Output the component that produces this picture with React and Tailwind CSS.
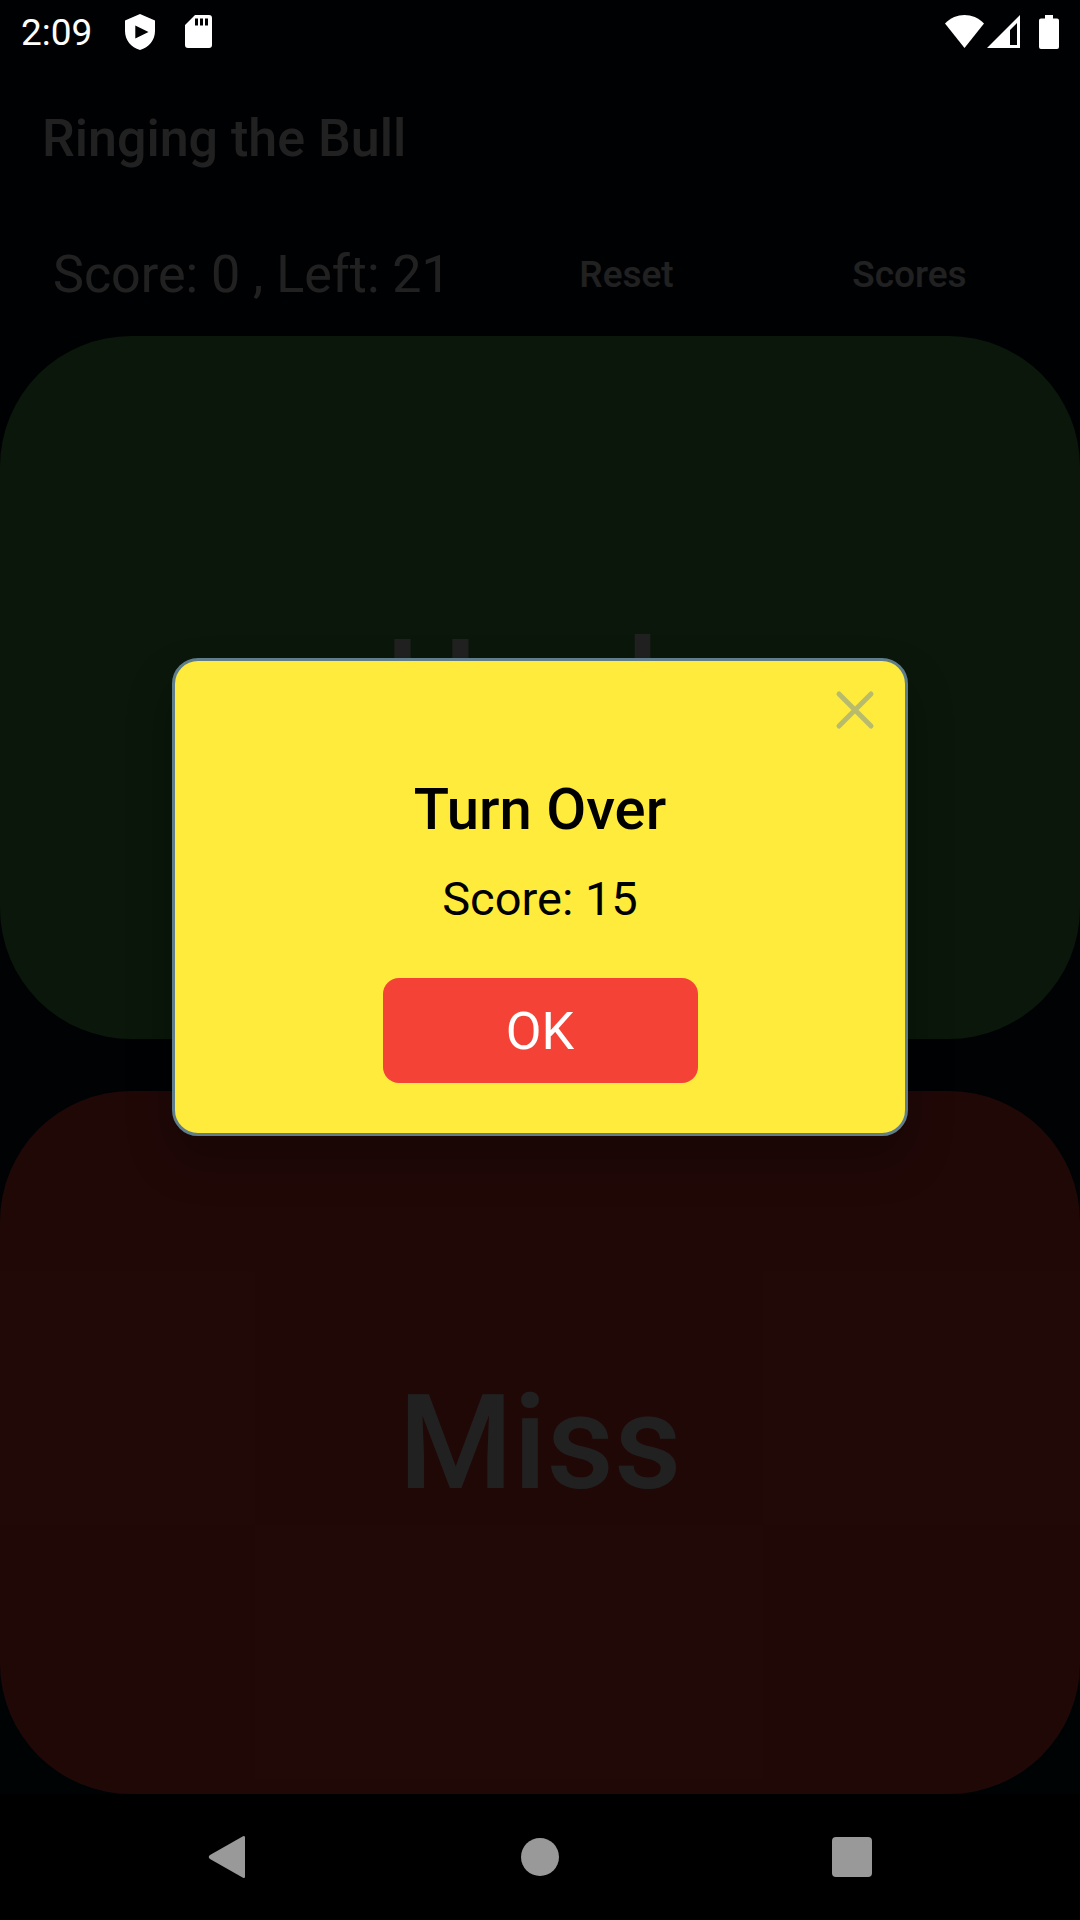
function StatusBar() {
  return (
    <div className="relative z-20 flex h-[63px] items-center justify-between px-[21px] text-white">
      <div className="flex items-center">
        <span className="pt-[2px] text-[37px] leading-[43px]">2:09</span>
        <svg viewBox="0 0 30 36" className="ml-[33px] h-[36px] w-[30px]" fill="currentColor">
          <path
            fillRule="evenodd"
            d="M15 0 L30 6.5 V17 C30 26 24 33.500 15 36 C6 33.500 0 26 0 17 V6.500 Z M10.300 11.500 V24.500 L23.500 18 Z"
          />
        </svg>
        <svg viewBox="0 0 27 33" className="ml-[30px] h-[33px] w-[27px]" fill="currentColor">
          <path
            fillRule="evenodd"
            d="M10 0 H24 Q27 0 27 3 V30 Q27 33 24 33 H3 Q0 33 0 30 V10 Z M10 3.500 V10.500 H13 V3.500 Z M15 3.500 V10.500 H18 V3.500 Z M20 3.500 V10.500 H23 V3.500 Z"
          />
        </svg>
      </div>
      <div className="flex items-center">
        <svg viewBox="0 0 39 33" className="h-[33px] w-[39px]" fill="currentColor">
          <path d="M0 8.500 C11 -2.800 28 -2.800 39 8.500 L19.500 33 Z" />
        </svg>
        <svg viewBox="0 0 33 33" className="ml-[3px] h-[33px] w-[33px]" fill="currentColor">
          <path fillRule="evenodd" d="M33 0 V33 H0 Z M30 8 L23 15 V30 H30 Z" />
        </svg>
        <svg viewBox="0 0 20 34" className="ml-[19px] h-[34px] w-[20px]" fill="currentColor">
          <path d="M6 0 H14 V3.500 H18 Q20 3.500 20 5.500 V32 Q20 34 18 34 H2 Q0 34 0 32 V5.500 Q0 3.500 2 3.500 H6 Z" />
        </svg>
      </div>
    </div>
  );
}

function ScoreDialog() {
  return (
    <div className="absolute inset-0 z-10 flex items-center justify-center bg-black/87">
      <div
        role="dialog"
        aria-labelledby="dialog-title"
        className="relative flex w-[736px] flex-col items-center rounded-[26px] border-3 border-[#607d8b] bg-[#ffeb3b] px-[50px] pt-[112px] pb-[50px] text-black shadow-[0_24px_45px_0px_rgba(0,0,0,0.25)]"
      >
        <button type="button" aria-label="Close" className="absolute top-[20px] right-[21px] p-[8px]">
          <svg viewBox="0 0 42 42" className="h-[42px] w-[42px]" fill="none" stroke="#b9bb6c" strokeWidth="5" strokeLinecap="round">
            <path d="M5 5 L37 37 M37 5 L5 37" />
          </svg>
        </button>
        <h2 id="dialog-title" className="text-[58px] leading-[72px] font-medium">
          Turn Over
        </h2>
        <p className="mt-[26px] text-[47px] leading-[56px]">Score: 15</p>
        <button
          type="button"
          className="mt-[51px] h-[105px] w-[315px] rounded-[16px] bg-[#f44336] pt-[2px] text-[52px] leading-[62px] text-white"
        >
          OK
        </button>
      </div>
    </div>
  );
}

function NavigationBar() {
  return (
    <nav className="grid h-[126px] grid-cols-[1fr_auto_1fr] items-center bg-black px-[208px] text-[#999999]">
      <button type="button" aria-label="Back" className="justify-self-start">
        <svg viewBox="4 0 38 44" className="h-[44px] w-[38px]" fill="currentColor">
          <path d="M39 1.300 Q41 0.300 41 2.500 V41.500 Q41 43.700 39 42.700 L6 24 Q3.500 22 6 20 Z" />
        </svg>
      </button>
      <button type="button" aria-label="Home" className="size-[38px] rounded-full bg-[#999999]" />
      <button type="button" aria-label="Overview" className="size-[40px] justify-self-end rounded-[4px] bg-[#999999]" />
    </nav>
  );
}

export default function App() {
  return (
    <div className="flex min-h-screen flex-col bg-black font-['Roboto',sans-serif]">
      <div className="relative flex flex-1 flex-col bg-linear-to-b from-[#03081c] to-[#041a24]">
        <StatusBar />
        <header className="flex h-[147px] items-center px-[42px] pt-1 text-white">
          <h1 className="text-[52px] leading-[62px] font-medium">Ringing the Bull</h1>
        </header>
        <div className="flex h-[126px] items-center pt-[3px] pl-[53px] text-white">
          <p className="w-[432px] text-[52px] leading-[62px] whitespace-nowrap">Score: 0 , Left: 21</p>
          <div className="grid flex-1 grid-cols-2 pr-[29px] text-[37px] leading-[44px]">
            <button type="button" className="font-medium">Reset</button>
            <button type="button" className="font-medium">Scores</button>
          </div>
        </div>
        <main className="flex flex-1 flex-col gap-[52px] text-[131px] leading-[154px] font-medium text-white">
          <button type="button" className="flex-1 rounded-[131px] bg-[#4caf50]">Hook</button>
          <button type="button" className="flex-1 rounded-[131px] bg-[#f44336]">Miss</button>
        </main>
        <ScoreDialog />
      </div>
      <NavigationBar />
    </div>
  );
}
